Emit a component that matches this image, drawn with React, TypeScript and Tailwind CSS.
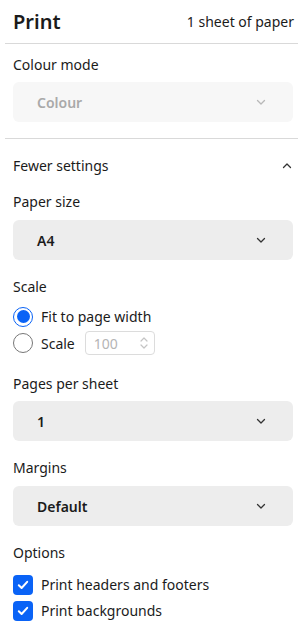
import React, { useState } from 'react';

const font = { fontFamily: '"Noto Sans", "Open Sans", sans-serif' };

function Chevron({ up = false, className = '' }: { up?: boolean; className?: string }) {
  return (
    <svg width="12" height="12" viewBox="0 0 12 12" className={className}>
      <path
        d={up ? 'M2.5 7.5 L6 4 L9.5 7.5' : 'M2.5 4.5 L6 8 L9.5 4.5'}
        fill="none"
        stroke="currentColor"
        strokeWidth="1.3"
        strokeLinecap="round"
        strokeLinejoin="round"
      />
    </svg>
  );
}

function SelectBox({ value, disabled = false }: { value: string; disabled?: boolean }) {
  return (
    <div
      className={`ml-[13px] mr-[5px] flex h-10 items-center justify-between rounded-md pl-6 pr-[26px] ${
        disabled ? 'bg-[#f7f7f7] text-[#a9a9a9]' : 'bg-[#ededed] text-[#1b1b1b]'
      }`}
    >
      <span className="text-[14px] font-semibold">{value}</span>
      <Chevron className={disabled ? 'text-[#b8b8b8]' : 'text-[#333]'} />
    </div>
  );
}

function Label({ children }: { children: React.ReactNode }) {
  return <div className="px-[13px] text-[14px] leading-5 text-[#1b1b1b]">{children}</div>;
}

function Check({ label }: { label: string }) {
  return (
    <div className="flex items-center gap-2">
      <div className="flex h-5 w-5 items-center justify-center rounded-[4px] bg-[#0a63f6]">
        <svg width="14" height="14" viewBox="0 0 14 14">
          <path d="M2.8 7.3 L5.6 10 L11.2 3.8" fill="none" stroke="white" strokeWidth="2" strokeLinecap="round" strokeLinejoin="round" />
        </svg>
      </div>
      <span className="text-[14px] text-[#1b1b1b]">{label}</span>
    </div>
  );
}

function Radio({ on, onClick }: { on: boolean; onClick: () => void }) {
  return (
    <span
      onClick={onClick}
      className={`flex h-5 w-5 items-center justify-center rounded-full ${
        on ? 'border-[1.5px] border-[#0a63f6]' : 'border border-[#777]'
      }`}
    >
      {on && <span className="h-[13px] w-[13px] rounded-full bg-[#0a63f6]" />}
    </span>
  );
}

export default function App() {
  const [fit, setFit] = useState(true);

  return (
    <div style={font} className="h-[636px] w-[298px] overflow-hidden bg-white">
      <div className="flex h-[43px] items-center justify-between pl-[13px] pr-1">
        <h1 className="text-[20px] font-semibold text-[#1b1b1b]">Print</h1>
        <span className="text-[14px] text-[#1b1b1b]">1 sheet of paper</span>
      </div>
      <div className="ml-[5px] h-px bg-[#d9d9d9]" />

      <div className="pt-[11px]">
        <Label>Colour mode</Label>
        <div className="mt-[7px]">
          <SelectBox value="Colour" disabled />
        </div>
      </div>
      <div className="ml-[5px] mt-[16px] h-px bg-[#d9d9d9]" />

      <div className="flex items-center justify-between pl-[13px] pr-[5px] pt-[16px]">
        <span className="text-[14px] text-[#1b1b1b]">Fewer settings</span>
        <Chevron up className="text-[#333]" />
      </div>

      <div className="pt-[16px]">
        <Label>Paper size</Label>
        <div className="mt-[8px]">
          <SelectBox value="A4" />
        </div>
      </div>

      <div className="pt-[17px]">
        <Label>Scale</Label>
        <div className="mt-[9px] flex flex-col gap-[4px] px-[13px]">
          <div className="flex items-center gap-2">
            <Radio on={fit} onClick={() => setFit(true)} />
            <span className="text-[14px] text-[#1b1b1b]">Fit to page width</span>
          </div>
          <div className="flex items-center gap-2">
            <Radio on={!fit} onClick={() => setFit(false)} />
            <span className="text-[14px] text-[#1b1b1b]">Scale</span>
            <div className="ml-[2px] flex h-6 w-[70px] items-center justify-between rounded-[4px] border border-[#dcdcdc] pl-2 pr-[6px]">
              <span className="text-[14px] text-[#b5b5b5]">100</span>
              <svg width="8" height="14" viewBox="0 0 8 14" className="text-[#c4c4c4]">
                <path d="M1 5 L4 2 L7 5 M1 9 L4 12 L7 9" fill="none" stroke="currentColor" strokeWidth="1.2" strokeLinecap="round" strokeLinejoin="round" />
              </svg>
            </div>
          </div>
        </div>
      </div>

      <div className="pt-[19px]">
        <Label>Pages per sheet</Label>
        <div className="mt-[7px]">
          <SelectBox value="1" />
        </div>
      </div>

      <div className="pt-[17px]">
        <Label>Margins</Label>
        <div className="mt-[8px]">
          <SelectBox value="Default" />
        </div>
      </div>

      <div className="pt-[17px]">
        <Label>Options</Label>
        <div className="mt-[11px] flex flex-col gap-[5px] px-[13px]">
          <Check label="Print headers and footers" />
          <Check label="Print backgrounds" />
        </div>
      </div>
    </div>
  );
}
